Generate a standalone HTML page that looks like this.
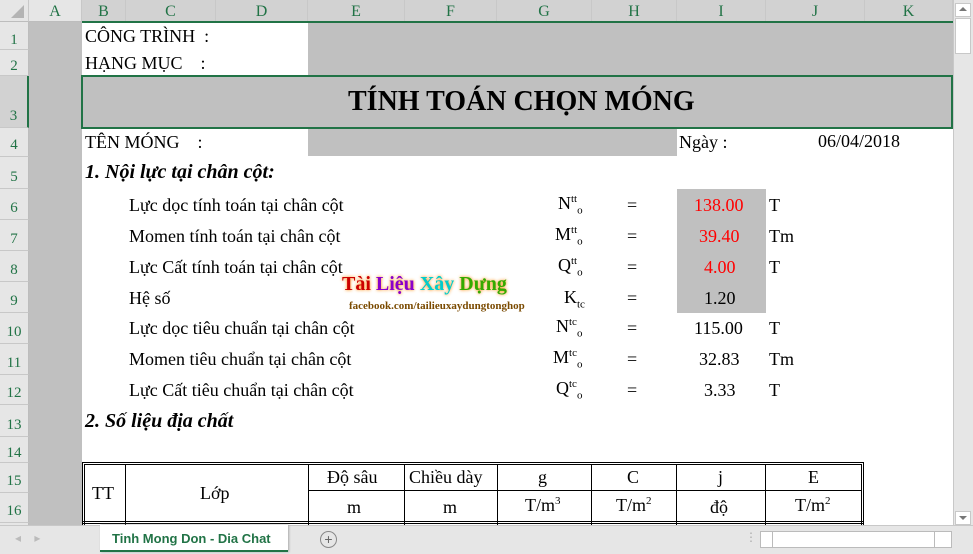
<!DOCTYPE html><html><head><meta charset="utf-8"><style>
*{margin:0;padding:0;box-sizing:border-box}
body{width:973px;height:554px;overflow:hidden;background:#fff;position:relative;font-family:"Liberation Serif",serif;color:#000}
.a{position:absolute}
.ch{position:absolute;top:0;height:22px;background:#e6e6e6;border-right:1px solid #c8c8c8;border-bottom:1px solid #bdbdbd;text-align:center;font-size:16px;line-height:24px;color:#217346}
.rh{position:absolute;left:0;width:29px;background:#e6e6e6;border-bottom:1px solid #c8c8c8;border-right:1px solid #bdbdbd;text-align:center;font-size:15px;color:#217346}
.t{position:absolute;font-size:18px;white-space:nowrap}
.r{color:#ff0000}
.g{background:#c0c0c0}
sup,sub{font-size:11px}
</style></head><body>
<div class="ch" style="left:0;width:29px;background:#e6e6e6"><div class="a" style="right:4px;bottom:3px;width:0;height:0;border-left:13px solid transparent;border-bottom:13px solid #b4b4b4"></div></div>
<div class="ch" style="left:29px;width:53px">A</div>
<div class="ch" style="left:82px;width:44px;background:#d2d2d2">B</div>
<div class="ch" style="left:126px;width:90px;background:#d2d2d2">C</div>
<div class="ch" style="left:216px;width:92px;background:#d2d2d2">D</div>
<div class="ch" style="left:308px;width:97px;background:#d2d2d2">E</div>
<div class="ch" style="left:405px;width:92px;background:#d2d2d2">F</div>
<div class="ch" style="left:497px;width:95px;background:#d2d2d2">G</div>
<div class="ch" style="left:592px;width:85px;background:#d2d2d2">H</div>
<div class="ch" style="left:677px;width:89px;background:#d2d2d2">I</div>
<div class="ch" style="left:766px;width:99px;background:#d2d2d2">J</div>
<div class="ch" style="left:865px;width:88px;background:#d2d2d2">K</div>
<div class="rh" style="top:22px;height:28px;line-height:36px">1</div>
<div class="rh" style="top:50px;height:26px;line-height:32px">2</div>
<div class="rh" style="top:76px;height:52px;line-height:80px;border-right:2px solid #217346;background:#d2d2d2">3</div>
<div class="rh" style="top:128px;height:29px;line-height:34px">4</div>
<div class="rh" style="top:157px;height:32px;line-height:40px">5</div>
<div class="rh" style="top:189px;height:31px;line-height:38px">6</div>
<div class="rh" style="top:220px;height:31px;line-height:38px">7</div>
<div class="rh" style="top:251px;height:31px;line-height:38px">8</div>
<div class="rh" style="top:282px;height:31px;line-height:38px">9</div>
<div class="rh" style="top:313px;height:31px;line-height:38px">10</div>
<div class="rh" style="top:344px;height:31px;line-height:38px">11</div>
<div class="rh" style="top:375px;height:30px;line-height:37px">12</div>
<div class="rh" style="top:405px;height:32px;line-height:40px">13</div>
<div class="rh" style="top:437px;height:26px;line-height:32px">14</div>
<div class="rh" style="top:463px;height:30px;line-height:36px">15</div>
<div class="rh" style="top:493px;height:30px;line-height:36px">16</div>
<div class="rh" style="top:523px;height:3px"></div>
<div class="a g" style="left:29px;top:22px;width:53px;height:503px"></div>
<div class="a g" style="left:308px;top:22px;width:645px;height:54px"></div>
<div class="a g" style="left:82px;top:77px;width:871px;height:51px"></div>
<div class="a g" style="left:308px;top:129px;width:369px;height:27px"></div>
<div class="a g" style="left:677px;top:189px;width:89px;height:124px"></div>
<div class="a" style="left:82px;top:21px;width:871px;height:2px;background:#217346"></div>
<div class="a" style="left:81px;top:75px;width:872px;height:54px;border:2px solid #217346"></div>
<div class="t" style="left:85px;top:26px">CÔNG TRÌNH&nbsp; :</div>
<div class="t" style="left:85px;top:53px">HẠNG MỤC&nbsp;&nbsp;&nbsp; :</div>
<div class="t" style="left:348px;top:86px;font-size:28px;font-weight:bold">TÍNH TOÁN CHỌN MÓNG</div>
<div class="t" style="left:85px;top:132px">TÊN MÓNG&nbsp;&nbsp;&nbsp; :</div>
<div class="t" style="left:679px;top:132px">Ngày :</div>
<div class="t" style="left:818px;top:131px">06/04/2018</div>
<div class="t" style="left:85px;top:161px;font-size:20px;font-weight:bold;font-style:italic">1. Nội lực tại chân cột:</div>
<div class="t" style="left:129px;top:195px">Lực dọc tính toán tại chân cột</div>
<div class="t" style="left:129px;top:226px">Momen tính toán tại chân cột</div>
<div class="t" style="left:129px;top:257px">Lực Cất tính toán tại chân cột</div>
<div class="t" style="left:129px;top:288px">Hệ số</div>
<div class="t" style="left:129px;top:318px">Lực dọc tiêu chuẩn tại chân cột</div>
<div class="t" style="left:129px;top:349px">Momen tiêu chuẩn tại chân cột</div>
<div class="t" style="left:129px;top:380px">Lực Cất tiêu chuẩn tại chân cột</div>
<div class="t" style="left:558px;top:193px">N<sup>tt</sup><sub>o</sub></div>
<div class="t" style="left:555px;top:224px">M<sup>tt</sup><sub>o</sub></div>
<div class="t" style="left:558px;top:255px">Q<sup>tt</sup><sub>o</sub></div>
<div class="t" style="left:564px;top:287px">K<sub>tc</sub></div>
<div class="t" style="left:556px;top:316px">N<sup>tc</sup><sub>o</sub></div>
<div class="t" style="left:553px;top:347px">M<sup>tc</sup><sub>o</sub></div>
<div class="t" style="left:556px;top:378px">Q<sup>tc</sup><sub>o</sub></div>
<div class="t" style="left:627px;top:195px">=</div><div class="t" style="left:627px;top:226px">=</div><div class="t" style="left:627px;top:257px">=</div><div class="t" style="left:627px;top:288px">=</div><div class="t" style="left:627px;top:318px">=</div><div class="t" style="left:627px;top:349px">=</div><div class="t" style="left:627px;top:380px">=</div>
<div class="t r" style="left:694px;top:195px">138.00</div>
<div class="t r" style="left:699px;top:226px">39.40</div>
<div class="t r" style="left:704px;top:257px">4.00</div>
<div class="t" style="left:704px;top:288px">1.20</div>
<div class="t" style="left:694px;top:318px">115.00</div>
<div class="t" style="left:699px;top:349px">32.83</div>
<div class="t" style="left:704px;top:380px">3.33</div>
<div class="t" style="left:769px;top:195px">T</div><div class="t" style="left:769px;top:226px">Tm</div><div class="t" style="left:769px;top:257px">T</div>
<div class="t" style="left:769px;top:318px">T</div><div class="t" style="left:769px;top:349px">Tm</div><div class="t" style="left:769px;top:380px">T</div>
<div class="t" style="left:342px;top:273px;font-size:20px;font-weight:bold;font-family:'Liberation Serif',serif;text-shadow:0 0 3px #f80"><span style="color:#c00">Tài</span> <span style="color:#80c">Liệu</span> <span style="color:#0cc">Xây</span> <span style="color:#3a0">Dựng</span></div>
<div class="t" style="left:349px;top:300px;font-size:11px;font-weight:bold;color:#7a4a00">facebook.com/tailieuxaydungtonghop</div>
<div class="t" style="left:85px;top:410px;font-size:20px;font-weight:bold;font-style:italic">2. Số liệu địa chất</div>
<div class="a" style="left:82px;top:462px;width:782px;height:63px;border:3px double #000;border-bottom:none"></div>
<div class="a" style="left:125px;top:464px;width:1px;height:61px;background:#000"></div>
<div class="a" style="left:308px;top:464px;width:1px;height:61px;background:#000"></div>
<div class="a" style="left:404px;top:464px;width:1px;height:61px;background:#000"></div>
<div class="a" style="left:497px;top:464px;width:1px;height:61px;background:#000"></div>
<div class="a" style="left:591px;top:464px;width:1px;height:61px;background:#000"></div>
<div class="a" style="left:676px;top:464px;width:1px;height:61px;background:#000"></div>
<div class="a" style="left:765px;top:464px;width:1px;height:61px;background:#000"></div>
<div class="a" style="left:308px;top:490px;width:554px;height:1px;background:#000"></div>
<div class="a" style="left:82px;top:521px;width:782px;height:3px;border-top:1px solid #000;border-bottom:1px solid #000"></div>
<div class="t" style="left:92px;top:483px">TT</div>
<div class="t" style="left:200px;top:483px">Lớp</div>
<div class="t" style="left:327px;top:467px">Độ sâu</div>
<div class="t" style="left:409px;top:467px">Chiều dày</div>
<div class="t" style="left:538px;top:467px">g</div>
<div class="t" style="left:627px;top:467px">C</div>
<div class="t" style="left:718px;top:467px">j</div>
<div class="t" style="left:808px;top:467px">E</div>
<div class="t" style="left:347px;top:497px">m</div>
<div class="t" style="left:443px;top:497px">m</div>
<div class="t" style="left:525px;top:495px">T/m<sup>3</sup></div>
<div class="t" style="left:616px;top:495px">T/m<sup>2</sup></div>
<div class="t" style="left:710px;top:497px">độ</div>
<div class="t" style="left:795px;top:495px">T/m<sup>2</sup></div>
<div class="a" style="left:953px;top:0;width:20px;height:525px;background:#e6e6e6;border-left:1px solid #c8c8c8"></div>
<div class="a" style="left:955px;top:3px;width:16px;height:14px;background:#fff;border:1px solid #c8c8c8"></div>
<div class="a" style="left:959px;top:7px;width:0;height:0;border-left:4px solid transparent;border-right:4px solid transparent;border-bottom:4px solid #777"></div>
<div class="a" style="left:955px;top:18px;width:16px;height:36px;background:#fff;border:1px solid #c8c8c8"></div>
<div class="a" style="left:955px;top:511px;width:16px;height:14px;background:#fff;border:1px solid #c8c8c8"></div>
<div class="a" style="left:959px;top:516px;width:0;height:0;border-left:4px solid transparent;border-right:4px solid transparent;border-top:4px solid #777"></div>
<div class="a" style="left:0;top:525px;width:973px;height:29px;background:#e6e6e6;border-top:1px solid #c8c8c8"></div>
<div class="t" style="left:15px;top:531px;font-size:12px;color:#bbb;font-family:'Liberation Sans',sans-serif">◂&nbsp;&nbsp;&nbsp;&nbsp;▸</div>
<div class="a" style="left:100px;top:525px;width:188px;height:27px;background:#fff;border-bottom:2px solid #217346;box-shadow:1px 0 2px #aaa"></div>
<div class="t" style="left:112px;top:531px;font-family:'Liberation Sans',sans-serif;font-size:13px;font-weight:bold;color:#217346">Tinh Mong Don - Dia Chat</div>
<div class="a" style="left:320px;top:531px;width:17px;height:17px;border:1px solid #888;border-radius:50%;text-align:center;font:14px/15px 'Liberation Sans',sans-serif;color:#666">+</div>
<div class="t" style="left:745px;top:530px;font-size:12px;color:#aaa">⋮</div>
<div class="a" style="left:760px;top:531px;width:192px;height:17px;background:#fff;border:1px solid #bbb"></div>
<div class="a" style="left:772px;top:532px;width:1px;height:15px;background:#bbb"></div>
<div class="a" style="left:934px;top:532px;width:1px;height:15px;background:#bbb"></div>
</body></html>
